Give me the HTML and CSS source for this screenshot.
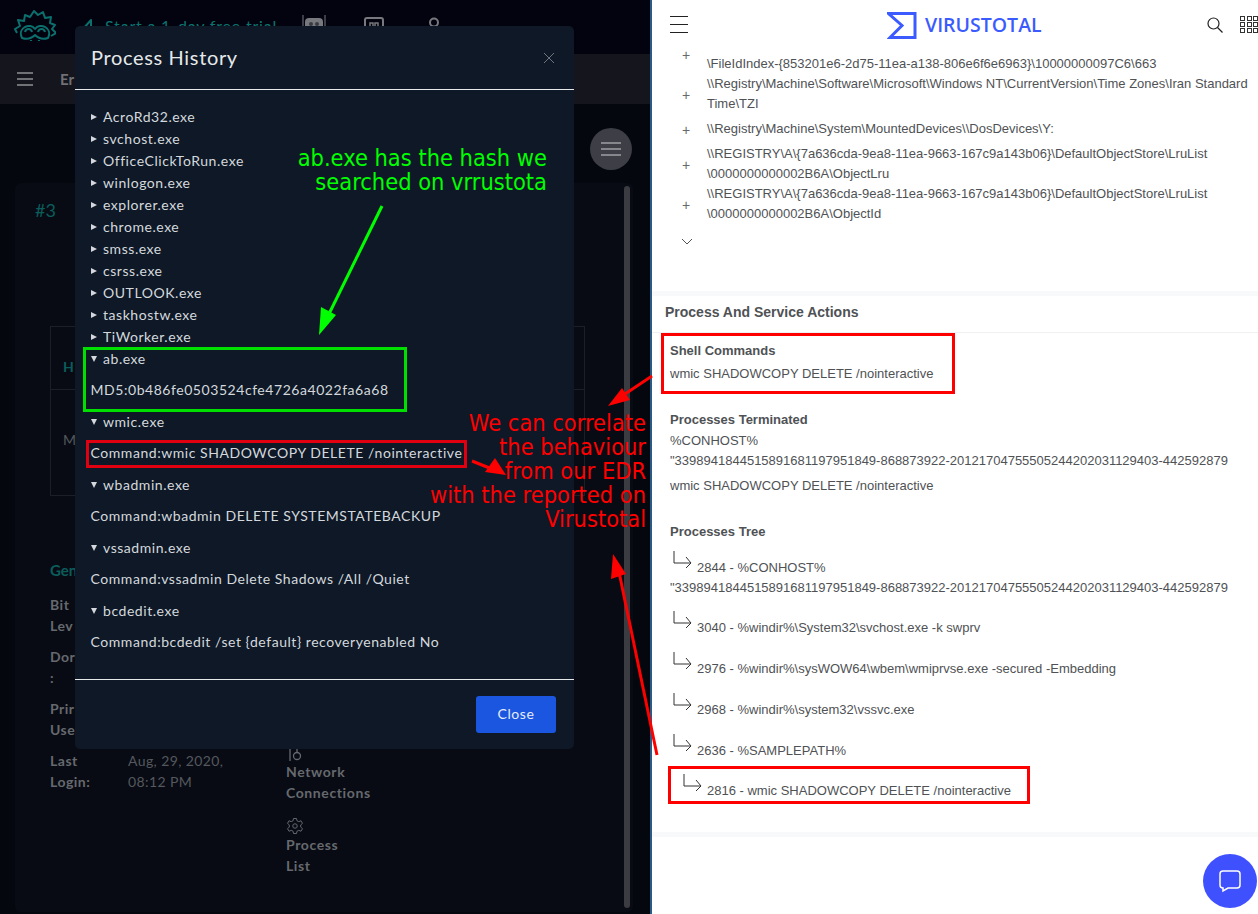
FILE: index.html
```html
<!DOCTYPE html>
<html lang="en">
<head>
<meta charset="utf-8">
<title>Process History and VirusTotal behaviour</title>
<link rel="stylesheet" href="styles.css">
</head>
<body>
<div class="page">
  <section class="edr">
    <header class="edr-top">
      <svg class="edr-logo" viewBox="0 0 42 31" width="42" height="31"><path class="logo-line" d="M3 23 L1 19 L6 16 L4 10 L10 11 L11 5 L16 7 L20 1 L24 5 L29 2 L31 8 L37 7 L36 13 L41 15 L38 19 L42 23 L37 26 M8 28 C3 18 16 12 21 19 C26 12 39 18 34 28 C28 30 24 28 21 25 C18 28 14 30 8 28 Z M11 22 C12 18 17 18 18 22 M24 22 C25 18 30 18 31 22 M17 30 A2.500 2 0 0 0 25 30"/></svg>
      <span class="trial">
        <svg viewBox="0 0 17 14" width="17" height="14"><path class="logo-line" d="M1 10 L9 1 L9 10 M5 10 H17"/></svg>
        Start a 1-day free trial
      </span>
      <svg class="top-icon robot" viewBox="0 0 24 14" width="24" height="14"><path class="gray-fill" d="M3 14 V7 Q3 3 7 3 H17 Q21 3 21 7 V14 Z"/><path class="gray-line" d="M1 0 V14 M23 0 V14"/><circle class="eye" cx="9" cy="9" r="2"/><circle class="eye" cx="15" cy="9" r="2"/></svg>
      <svg class="top-icon block" viewBox="0 0 20 14" width="20" height="14"><path class="gray-line thick" d="M1 14 V3 Q1 1 3 1 H17 Q19 1 19 3 V14"/><path class="gray-line mid" d="M6 14 V6 H9 V14 M11 14 V6 H14 V14"/></svg>
      <svg class="top-icon person" viewBox="0 0 12 14" width="12" height="14"><circle class="gray-line thick" cx="6" cy="5.500" r="4"/></svg>
    </header>
    <div class="edr-sub">
      <span class="burger"><i></i><i></i><i></i></span>
      <span class="crumb">Er</span>
    </div>
    <div class="edr-main">
      <div class="round-row">
        <button class="round-btn" type="button"><span class="burger"><i></i><i></i><i></i></span></button>
      </div>
      <article class="card">
        <div class="card-scroll"></div>
        <h2 class="card-id">#3</h2>
        <div class="tbl">
          <div class="tbl-head">H</div>
          <div class="tbl-row">M</div>
        </div>
        <h3 class="gen">Gen</h3>
        <div class="info">
          <dl class="facts">
            <dt>Bit<br>Lev</dt><dd></dd>
            <dt>Dor<br>:</dt><dd></dd>
            <dt>Prir<br>Use</dt><dd></dd>
            <dt>Last<br>Login:</dt><dd>Aug, 29, 2020,<br>08:12 PM</dd>
          </dl>
          <ul class="tools">
            <li>
              <svg viewBox="0 0 16 16" width="16" height="16"><path class="tool-line" d="M1 1 H7 M4 1 V15 M11 0 V6"/><circle class="tool-line" cx="11" cy="10" r="3.500"/></svg>
              <span>Network<br>Connections</span>
            </li>
            <li>
              <svg viewBox="0 0 24 24" width="18" height="18"><circle class="tool-line" cx="12" cy="12" r="3"/><path class="tool-line" d="M10 2 H14 L14.600 5 L17 6.200 L20 5 L22 8.500 L19.600 10.500 V13.500 L22 15.500 L20 19 L17 17.800 L14.600 19 L14 22 H10 L9.400 19 L7 17.800 L4 19 L2 15.500 L4.400 13.500 V10.500 L2 8.500 L4 5 L7 6.200 L9.400 5 Z"/></svg>
              <span>Process<br>List</span>
            </li>
          </ul>
        </div>
      </article>
    </div>

    <div class="modal">
      <div class="modal-head">
        <h1>Process History</h1>
        <svg class="modal-x" viewBox="0 0 12 12" width="12" height="12"><path d="M1 1 L11 11 M11 1 L1 11"/></svg>
      </div>
      <div class="modal-body">
        <details><summary>AcroRd32.exe</summary></details>
        <details><summary>svchost.exe</summary></details>
        <details><summary>OfficeClickToRun.exe</summary></details>
        <details><summary>winlogon.exe</summary></details>
        <details><summary>explorer.exe</summary></details>
        <details><summary>chrome.exe</summary></details>
        <details><summary>smss.exe</summary></details>
        <details><summary>csrss.exe</summary></details>
        <details><summary>OUTLOOK.exe</summary></details>
        <details><summary>taskhostw.exe</summary></details>
        <details><summary>TiWorker.exe</summary></details>
        <details open><summary>ab.exe</summary><p>MD5:0b486fe0503524cfe4726a4022fa6a68</p></details>
        <details open><summary>wmic.exe</summary><p>Command:wmic SHADOWCOPY DELETE /nointeractive</p></details>
        <details open><summary>wbadmin.exe</summary><p>Command:wbadmin DELETE SYSTEMSTATEBACKUP</p></details>
        <details open><summary>vssadmin.exe</summary><p>Command:vssadmin Delete Shadows /All /Quiet</p></details>
        <details open><summary>bcdedit.exe</summary><p>Command:bcdedit /set {default} recoveryenabled No</p></details>
      </div>
      <div class="modal-foot"><button class="close-btn" type="button">Close</button></div>
    </div>
  </section>

  <main class="vt">
    <header class="vt-top">
      <span class="vt-burger"><i></i><i></i><i></i></span>
      <div class="vt-brand">
        <svg viewBox="0 0 30 27" width="30" height="27"><path class="brand-line" d="M1.500 1.500 H28 V25.500 H3 L15 13.500 Z"/></svg>
        <span class="brand-name">VIRUSTOTAL</span>
      </div>
      <div class="vt-tools">
        <svg viewBox="0 0 16 16" width="16" height="16"><circle class="vt-icon" cx="6.500" cy="6.500" r="5.500"/><path class="vt-icon" d="M10.500 10.500 L15.500 15.500"/></svg>
        <span class="apps"><i></i><i></i><i></i><i></i><i></i><i></i><i></i><i></i><i></i></span>
      </div>
    </header>

    <ul class="reg">
      <li class="reg-first"><span class="plus">+</span><span>\FileIdIndex-{853201e6-2d75-11ea-a138-806e6f6e6963}\10000000097C6\663</span></li>
      <li><span class="plus">+</span><span>\\Registry\Machine\Software\Microsoft\Windows NT\CurrentVersion\Time Zones\Iran Standard Time\TZI</span></li>
      <li class="reg-single"><span class="plus">+</span><span>\\Registry\Machine\System\MountedDevices\\DosDevices\Y:</span></li>
      <li><span class="plus">+</span><span>\\REGISTRY\A\{7a636cda-9ea8-11ea-9663-167c9a143b06}\DefaultObjectStore\LruList \0000000000002B6A\ObjectLru</span></li>
      <li><span class="plus">+</span><span>\\REGISTRY\A\{7a636cda-9ea8-11ea-9663-167c9a143b06}\DefaultObjectStore\LruList \0000000000002B6A\ObjectId</span></li>
    </ul>
    <svg class="chev" viewBox="0 0 12 7" width="12" height="7"><path d="M1 1 L6 6 L11 1"/></svg>

    <div class="band"></div>
    <h2 class="sec-title">Process And Service Actions</h2>
    <div class="sec-body">
      <h3 class="first">Shell Commands</h3>
      <p>wmic SHADOWCOPY DELETE /nointeractive</p>
      <h3 class="term">Processes Terminated</h3>
      <p class="long">%CONHOST%<br>"3398941844515891681197951849-868873922-20121704755505244202031129403-442592879</p>
      <p>wmic SHADOWCOPY DELETE /nointeractive</p>
      <h3 class="tree-h">Processes Tree</h3>
      <div class="tree">
        <p class="node"><svg class="elbow" viewBox="0 0 19 18" width="19" height="18"><path d="M1 0 V12 H18 M13 6 L18 12 L13 17"/></svg>2844 - %CONHOST%<br>"3398941844515891681197951849-868873922-20121704755505244202031129403-442592879</p>
        <p class="node"><svg class="elbow" viewBox="0 0 19 18" width="19" height="18"><path d="M1 0 V12 H18 M13 6 L18 12 L13 17"/></svg>3040 - %windir%\System32\svchost.exe -k swprv</p>
        <p class="node"><svg class="elbow" viewBox="0 0 19 18" width="19" height="18"><path d="M1 0 V12 H18 M13 6 L18 12 L13 17"/></svg>2976 - %windir%\sysWOW64\wbem\wmiprvse.exe -secured -Embedding</p>
        <p class="node"><svg class="elbow" viewBox="0 0 19 18" width="19" height="18"><path d="M1 0 V12 H18 M13 6 L18 12 L13 17"/></svg>2968 - %windir%\system32\vssvc.exe</p>
        <p class="node"><svg class="elbow" viewBox="0 0 19 18" width="19" height="18"><path d="M1 0 V12 H18 M13 6 L18 12 L13 17"/></svg>2636 - %SAMPLEPATH%</p>
        <p class="node child"><svg class="elbow" viewBox="0 0 19 18" width="19" height="18"><path d="M1 0 V12 H18 M13 6 L18 12 L13 17"/></svg>2816 - wmic SHADOWCOPY DELETE /nointeractive</p>
      </div>
    </div>
    <div class="band band-end"></div>
  </main>

  <button class="chat" type="button">
    <svg viewBox="0 0 24 24" width="24" height="24"><path d="M5 2 H19 Q22 2 22 5 V16 Q22 19 19 19 H10 L5 22 V19 Q2 19 2 16 V5 Q2 2 5 2 Z"/></svg>
  </button>

  <div class="note note-green">ab.exe has the hash we<br>searched on vrrustota</div>
  <div class="note note-red">We can correlate<br>the behaviour<br>from our EDR<br>with the reported on<br>Virustotal</div>
  <div class="mark mark-green"></div>
  <div class="mark mark-cmd"></div>
  <div class="mark mark-shell"></div>
  <div class="mark mark-node"></div>
  <svg class="arrows" viewBox="0 0 1258 914" width="1258" height="914">
    <path class="arrow-green" d="M382 206 L327 318"/>
    <path class="head-green" d="M319 335 L321 307 L336 315 Z"/>
    <path class="arrow-red" d="M652 376 L622 396"/>
    <path class="head-red" d="M608 406 L622 388 L630 400 Z"/>
    <path class="arrow-red" d="M472 461 L492 469"/>
    <path class="head-red" d="M506 475 L495 458 L485 472 Z"/>
    <path class="arrow-red" d="M657 755 L619 572"/>
    <path class="head-red" d="M613 554 L611 579 L626 574 Z"/>
  </svg>
</div>
</body>
</html>
```

FILE: styles.css
```css
* { box-sizing: border-box; }
html, body { margin: 0; padding: 0; }
body { width: 1258px; height: 914px; overflow: hidden; background: #fff; }
h1, h2, h3, p, ul, dl, dd { margin: 0; padding: 0; }
ul { list-style: none; }

.page { position: relative; display: flex; width: 1258px; height: 914px; overflow: hidden; }

/* Left: EDR console, dimmed behind the dialog */
.edr {
  position: relative;
  flex: 0 0 650px;
  height: 914px;
  display: flex;
  flex-direction: column;
  background: #03040c;
  font-family: Lato, "Noto Sans", sans-serif;
  overflow: hidden;
}
.edr-top { height: 54px; flex: none; display: flex; align-items: flex-start; padding: 10px 0 0 14px; background: #02030e; }
.edr-logo { flex: none; }
.logo-line { fill: none; stroke: #0b6f6d; stroke-width: 2; stroke-linejoin: round; }
.trial { display: flex; align-items: center; gap: 6px; margin: 5px 0 0 26px; width: 220px; flex: none; color: #0c7370; font-size: 16px; line-height: 22px; letter-spacing: .8px; white-space: nowrap; }
.top-icon { flex: none; }
.robot { margin-top: 5px; }
.block { margin-top: 7px; margin-left: 38px; }
.person { margin-top: 7px; margin-left: 44px; }
.gray-fill { fill: #77797e; }
.eye { fill: #3a3b40; }
.gray-line { fill: none; stroke: #77797e; stroke-width: 1; }
.thick { stroke-width: 2; }
.mid { stroke-width: 1.500; }

.edr-sub { height: 50px; flex: none; display: flex; align-items: center; padding-left: 17px; background: #15161d; }
.burger { display: flex; flex-direction: column; gap: 4px; width: 16px; }
.burger i { display: block; height: 2px; background: #6f7176; }
.crumb { margin-left: 27px; color: #6f7176; font-size: 15px; font-weight: 700; }

.edr-main { flex: 1; display: flex; flex-direction: column; min-height: 0; background: #05070f; }
.round-row { height: 79px; flex: none; display: flex; justify-content: flex-end; padding: 24px 18px 0 0; }
.round-btn { width: 42px; height: 42px; padding: 0; border: 0; border-radius: 50%; background: #3d3e46; display: flex; align-items: center; justify-content: center; }
.round-btn .burger { width: 20px; }
.round-btn .burger i { background: #85878c; }

.card { position: relative; flex: 1; margin: 0 17px 2px 15px; padding: 15px 20px 0 20px; background: #080b13; border-radius: 6px; }
.card-scroll { position: absolute; top: 3px; right: 3px; width: 6px; bottom: 4px; background: #3a3c41; border-radius: 3px; }
.card-id { color: #0b5d5c; font-size: 18px; font-weight: 400; line-height: 24px; }
.tbl { width: 535px; height: 170px; margin: 104px 0 0 15px; border: 1px solid #1b1f27; }
.tbl-head { height: 63px; padding: 29px 0 0 12px; color: #0b5d5c; font-size: 14px; font-weight: 700; line-height: 22px; border-bottom: 1px solid #1b1f27; }
.tbl-row { padding: 39px 0 0 12px; color: #55585e; font-size: 14px; line-height: 22px; }
.gen { margin: 63px 0 0 15px; color: #0b5d5c; font-size: 15px; font-weight: 700; line-height: 22px; }
.info { display: flex; align-items: flex-start; margin: 13px 0 0 15px; }
.facts { display: grid; grid-template-columns: 78px 100px; row-gap: 10px; width: 236px; color: #66696e; font-size: 14px; line-height: 21px; }
.facts dt { font-weight: 700; letter-spacing: .5px; }
.facts dd { font-size: 14px; line-height: 21px; letter-spacing: .4px; color: #55585e; white-space: nowrap; }
.tools { width: 120px; padding-top: 152px; color: #66696e; font-size: 14px; font-weight: 700; line-height: 21px; letter-spacing: .6px; }
.tools li { margin-bottom: 14px; }
.tools svg { display: block; margin-bottom: -1px; }
.tool-line { fill: none; stroke: #66696e; stroke-width: 1.300; }

/* Dialog */
.modal {
  position: absolute;
  left: 75px;
  top: 26px;
  width: 499px;
  height: 723px;
  background: #0e1826;
  border-radius: 5px;
  color: #d4d8dd;
  font-size: 14px;
  letter-spacing: .55px;
}
.modal-head { height: 64px; display: flex; align-items: flex-start; justify-content: space-between; padding: 17px 19px 0 16px; border-bottom: 1px solid #e6e8ea; }
.modal-head h1 { color: #e6e8ea; font-size: 20px; font-weight: 400; line-height: 28px; letter-spacing: .65px; }
.modal-x { margin-top: 9px; }
.modal-x path { fill: none; stroke: #6d747e; stroke-width: 1; }
.modal-body { height: 589px; padding: 16px 16px 0 15.500px; }
summary { display: block; position: relative; padding-left: 12.500px; line-height: 22px; white-space: nowrap; }
summary::before { content: ""; position: absolute; left: 0; top: 8px; border-style: solid; border-width: 3.500px 0 3.500px 6px; border-color: transparent transparent transparent #d4d8dd; }
details[open] summary::before { top: 8px; border-width: 6px 3px 0; border-color: #d4d8dd transparent transparent; }
details p { margin: 9px 0 10px; line-height: 22px; white-space: nowrap; }
.modal-foot { display: flex; justify-content: flex-end; padding: 16px 18px 0 0; border-top: 1px solid #e6e8ea; }
.close-btn { width: 80px; height: 37px; padding: 0 0 2px; border: 0; border-radius: 3px; background: #1a56e0; color: #e6ecf8; font: 14px Lato, "Noto Sans", sans-serif; letter-spacing: .55px; }

/* Right: VirusTotal report */
.vt {
  flex: 1;
  min-width: 0;
  height: 914px;
  background: #fff;
  border-left: 2px solid #2a5a86;
  color: #4f5255;
  font-family: "Liberation Sans", Arial, sans-serif;
  font-size: 13px;
  line-height: 20px;
}
.vt-top { height: 44px; display: flex; align-items: flex-start; }
.vt-burger { display: flex; flex-direction: column; gap: 7px; width: 18px; margin: 16px 0 0 18px; }
.vt-burger i { display: block; height: 1px; background: #222; }
.vt-brand { display: flex; align-items: center; gap: 8px; margin: 12px 0 0 199px; color: #3b5bff; font-size: 19.500px; line-height: 27px; font-family: "Open Sans", sans-serif; font-weight: 600; white-space: nowrap; }
.brand-name { margin-top: -2px; }
.brand-line { fill: none; stroke: #3b5bff; stroke-width: 3; }
.vt-tools { display: flex; align-items: center; gap: 17px; margin: 16px 0 0 auto; }
.vt-icon { fill: none; stroke: #222; stroke-width: 1.200; }
.apps { display: grid; grid-template-columns: repeat(3, 5px); gap: 1px 1.500px; width: 18px; }
.apps i { display: block; height: 5px; border: 1px solid #333; }

.reg { margin-top: 10px; padding-left: 39px; }
.reg li { display: flex; align-items: center; }
.reg-single { margin: 4px 0; }
.plus { flex: none; width: 16px; margin: 2px 13px 0 -13px; color: #66696c; font-size: 14px; text-align: center; }
.reg-first .plus { margin-top: -18px; }
.chev { display: block; margin: 14px 0 0 29px; }
.chev path { fill: none; stroke: #555; stroke-width: 1; }

.band { height: 5px; margin-top: 46px; background: #f8f9fa; }
.sec-title { padding: 5px 0 0 13px; height: 37px; line-height: 22px; font-size: 14px; font-weight: 700; color: #4f5255; border-bottom: 1px solid #eef0f2; }
.sec-body { padding: 8px 0 0 18px; }
.sec-body h3 { font-size: 13px; font-weight: 700; line-height: 20px; color: #4f5255; }
.sec-body .first { margin-bottom: 3px; }
.sec-body p { line-height: 20px; }
.sec-body .term { margin-top: 26px; margin-bottom: 1px; }
.long { margin-bottom: 5px; }
.sec-body .tree-h { margin-top: 26px; margin-bottom: 16px; }
.tree .node { margin-bottom: 21px; white-space: nowrap; }
.tree .node:first-child { margin-bottom: 20px; }
.tree .child { margin: -1px 0 0 10px; }
.elbow { display: inline-block; margin: -10px 5px 0 3px; vertical-align: 3px; }
.elbow path { fill: none; stroke: #333; stroke-width: 1; }
.band-end { margin-top: 31px; }

.chat { position: absolute; left: 1203px; top: 854px; width: 54px; height: 54px; padding: 0; border: 0; border-radius: 50%; background: #3f51ff; display: flex; align-items: center; justify-content: center; }
.chat path { fill: none; stroke: #fff; stroke-width: 1.500; }

/* Hand-drawn annotations on top of the collage */
.note { position: absolute; text-align: right; font-family: "DejaVu Sans Condensed", "DejaVu Sans", sans-serif; font-stretch: condensed; font-size: 23.400px; line-height: 24px; white-space: nowrap; }
.note-green { right: 711px; top: 146px; color: #00ff00; }
.note-red { right: 612px; top: 411px; color: #ff0000; }
.mark { position: absolute; border-style: solid; border-width: 3px; }
.mark-green { left: 83px; top: 347px; width: 324px; height: 65px; border-color: #00e000; }
.mark-cmd { left: 86px; top: 440px; width: 381px; height: 28px; border-color: #e00010; }
.mark-shell { left: 661px; top: 333px; width: 294px; height: 61px; border-color: #ff0000; }
.mark-node { left: 668px; top: 766px; width: 362px; height: 38px; border-color: #ff0000; }
.arrows { position: absolute; left: 0; top: 0; pointer-events: none; }
.arrow-green { fill: none; stroke: #00ff00; stroke-width: 3; }
.head-green { fill: #00ff00; }
.arrow-red { fill: none; stroke: #ff0000; stroke-width: 3; }
.head-red { fill: #ff0000; }
```
